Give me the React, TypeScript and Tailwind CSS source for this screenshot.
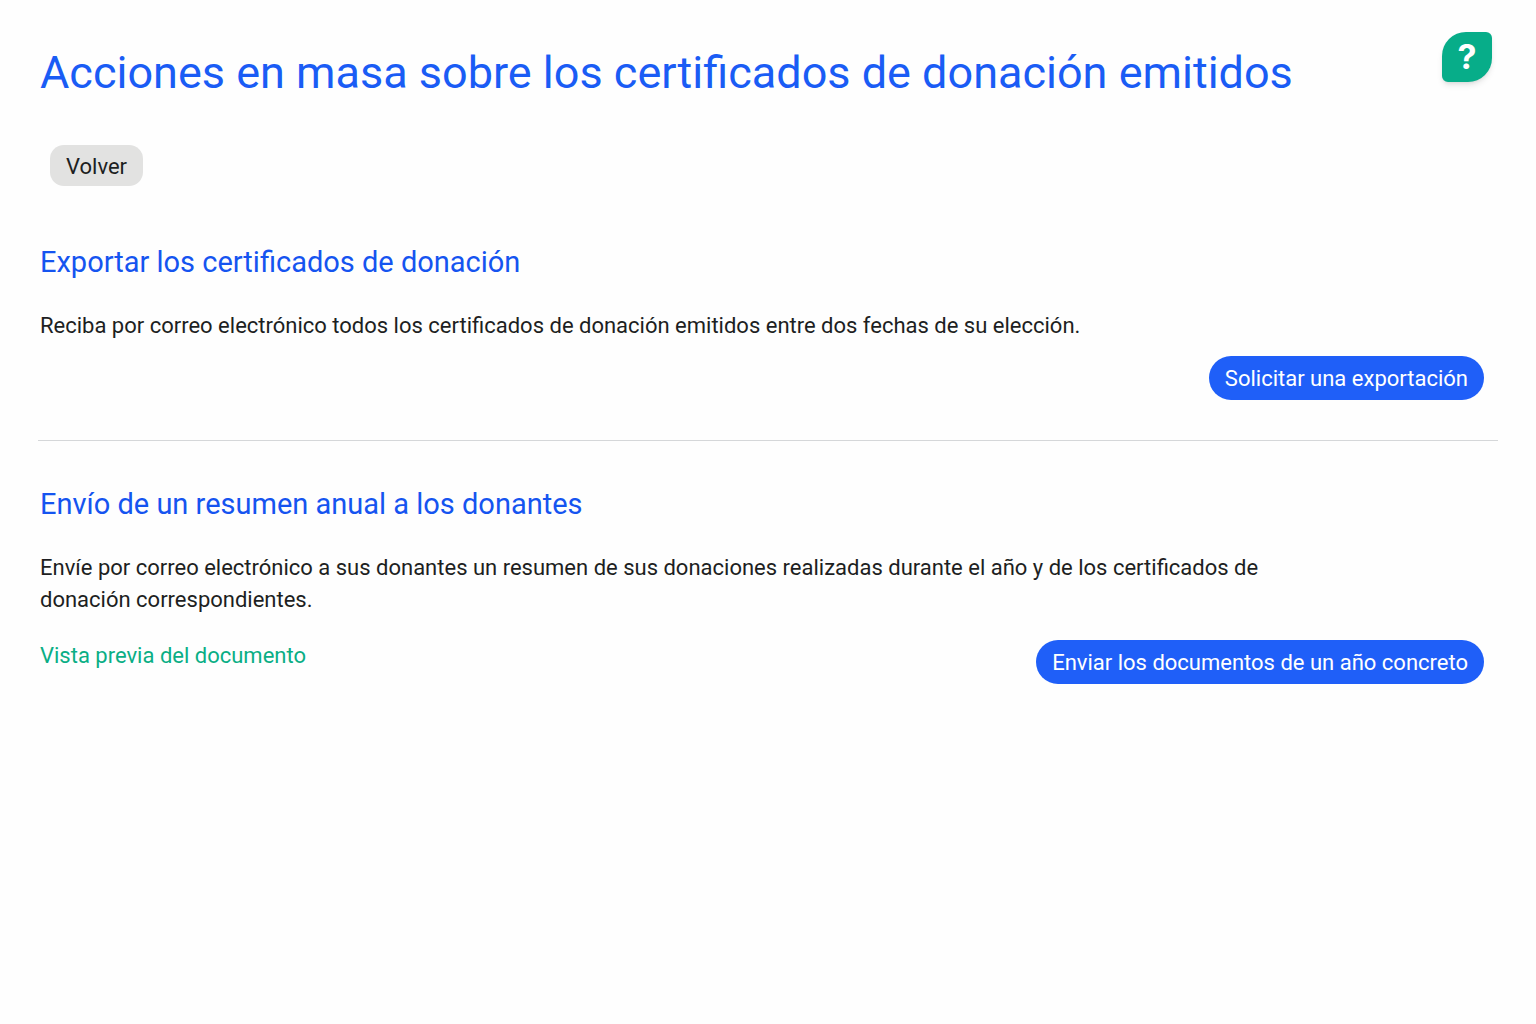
import type { ReactNode } from 'react'

interface SectionProps {
  title: string
  children: ReactNode
}

function Section({ title, children }: SectionProps) {
  return (
    <section>
      <h2 className="text-[29px] leading-10 text-[#1554f0]">{title}</h2>
      {children}
    </section>
  )
}

function PrimaryButton({ children }: { children: ReactNode }) {
  return (
    <button
      type="button"
      className="h-11 shrink-0 rounded-full bg-[#1f5ff8] px-4 pt-0.5 text-[22px] leading-8 whitespace-nowrap text-white"
    >
      {children}
    </button>
  )
}

export default function App() {
  return (
    <div className="min-h-screen bg-[#fefefe] px-10 pt-8 font-[Roboto,Arial,sans-serif] text-[#1d1f22]">
      <header className="flex items-start justify-between">
        <h1 className="pt-3 text-[45px] leading-[58px] text-[#1a5cf5]">
          Acciones en masa sobre los certificados de donación emitidos
        </h1>
        <button
          type="button"
          aria-label="Ayuda"
          className="mr-1 size-[50px] shrink-0 rounded-tl-3xl rounded-tr-md rounded-br-3xl rounded-bl-md bg-[#07ad89] font-[Inter,sans-serif] text-[34px] leading-none font-bold text-white shadow-md"
        >
          ?
        </button>
      </header>

      <button type="button" className="mt-[43px] ml-[10px] h-[41px] rounded-[14px] bg-[#e2e2e1] px-4 pt-0.5 text-[22px]">
        Volver
      </button>

      <main className="mt-14">
        <Section title="Exportar los certificados de donación">
          <p className="mt-6 pt-1 text-[22px] leading-8">
            Reciba por correo electrónico todos los certificados de donación emitidos entre dos fechas de su elección.
          </p>
          <div className="mt-[14px] mr-3 flex justify-end">
            <PrimaryButton>Solicitar una exportación</PrimaryButton>
          </div>
        </Section>

        <hr className="-mx-0.5 mt-10 mb-[43px] border-[#d5d7d9]" />

        <Section title="Envío de un resumen anual a los donantes">
          <p className="mt-6 max-w-[1240px] pt-1 text-[22px] leading-8">
            Envíe por correo electrónico a sus donantes un resumen de sus donaciones realizadas durante el año y de los
            certificados de donación correspondientes.
          </p>
          <div className="mt-6 mr-3 flex items-start justify-between">
            <a href="#vista-previa" className="text-[22px] leading-8 text-[#0aae85]">
              Vista previa del documento
            </a>
            <PrimaryButton>Enviar los documentos de un año concreto</PrimaryButton>
          </div>
        </Section>
      </main>
    </div>
  )
}
